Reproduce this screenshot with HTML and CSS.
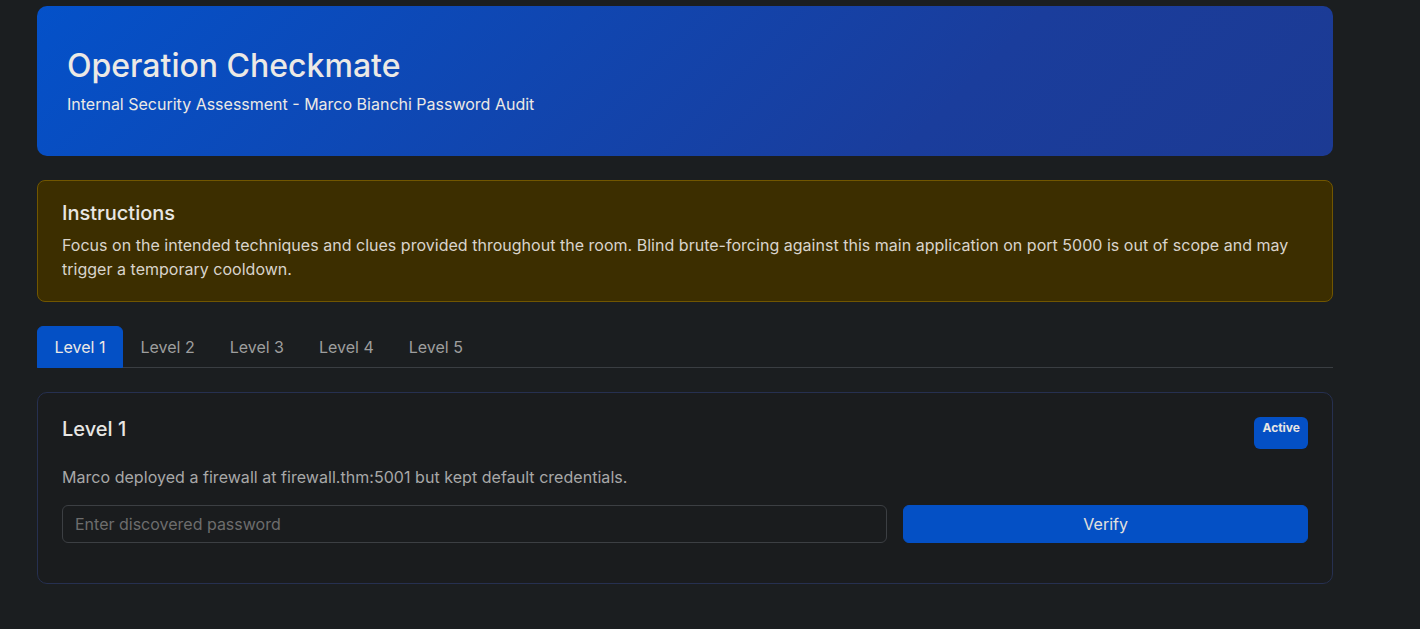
FILE: index.html
```html
<!DOCTYPE html>
<html lang="en">
<head>
    <meta charset="UTF-8">
    <meta name="viewport" content="width=device-width, initial-scale=1.0">
    <title>Operation Checkmate</title>
    <link rel="stylesheet" href="styles.css">
</head>
<body>
    <div class="container">
        <div class="hero">
            <h1>Operation Checkmate</h1>
            <p>Internal Security Assessment - Marco Bianchi Password Audit</p>
        </div>

        <div class="notice">
            <h5>Instructions</h5>
            <p>Focus on the intended techniques and clues provided throughout the room. Blind brute-forcing against this main application on port 5000 is out of scope and may trigger a temporary cooldown.</p>
        </div>

        <ul class="tabs">
            <li class="tab active">Level 1</li>
            <li class="tab">Level 2</li>
            <li class="tab">Level 3</li>
            <li class="tab">Level 4</li>
            <li class="tab">Level 5</li>
        </ul>

        <div class="card">
            <div class="card-head">
                <h5>Level 1</h5>
                <span class="badge">Active</span>
            </div>
            <p class="desc">Marco deployed a firewall at firewall.thm:5001 but kept default credentials.</p>
            <form class="verify-form" onsubmit="return false">
                <input type="text" placeholder="Enter discovered password">
                <button type="submit">Verify</button>
            </form>
        </div>
    </div>
</body>
</html>
```

FILE: styles.css
```css
body {
    margin: 0;
    background-color: #1b1e20;
    color: #e8e6e3;
    font-family: Inter, "Noto Sans", sans-serif;
    font-size: 16px;
    line-height: 1.5;
}
.container {
    width: 1296px;
    margin-left: 37px;
    padding-top: 6px;
}
.hero {
    background: linear-gradient(135deg, #0451c9 0%, #1a3d9c 70%, #1c3a93 100%);
    border-radius: 10px;
    padding: 41px 30px 40px;
    margin-bottom: 24px;
    color: #ece9e5;
}
.hero h1 {
    margin: 0 0 7px;
    font-size: 32px;
    font-weight: 500;
    line-height: 1.2;
}
.hero p {
    margin: 0;
}
.notice {
    background-color: #3c2e00;
    border: 1px solid #715600;
    border-radius: 8px;
    padding: 20px 24px;
    margin-bottom: 24px;
}
.notice h5, .card h5 {
    margin: 0 0 8px;
    font-size: 20px;
    font-weight: 500;
    line-height: 1.2;
    color: #e8e6e3;
}
.notice p {
    margin: 0;
    color: #d9d4cc;
    letter-spacing: 0.02px;
}
.tabs {
    display: flex;
    list-style: none;
    margin: 0 0 24px;
    padding: 0;
    border-bottom: 1px solid #3a3e42;
}
.tab {
    padding: 8px 16.5px;
    border: 1px solid transparent;
    border-top-left-radius: 6px;
    border-top-right-radius: 6px;
    margin-bottom: -1px;
    color: #9e9e9e;
    cursor: pointer;
}
.tab.active {
    background-color: #0450c5;
    border-color: #0450c5;
    color: #ece9e5;
}
.card {
    background-color: #1a1c1e;
    border: 1px solid #263050;
    border-radius: 10px;
    padding: 24px;
}
.card-head {
    display: flex;
    justify-content: space-between;
}
.badge {
    padding: 5px 8px 3px;
    background-color: #0450c5;
    border-radius: 6px;
    color: #e8e6e3;
    font-size: 12px;
    font-weight: 700;
    line-height: 1;
}
.desc {
    margin: 16px 0;
    color: #a8a8a8;
    letter-spacing: 0.04px;
}
.verify-form {
    display: grid;
    grid-template-columns: calc((100% + 16px) * 2 / 3 - 16px) 1fr;
    column-gap: 16px;
    margin-bottom: 16px;
}
.verify-form input {
    height: 38px;
    box-sizing: border-box;
    padding: 6px 12px;
    background-color: #1a1c1e;
    border: 1px solid #3c3f43;
    border-radius: 6px;
    color: #e8e6e3;
    font: inherit;
}
.verify-form input::placeholder {
    color: #6d6d6d;
}
.verify-form button {
    height: 38px;
    background-color: #0450c5;
    border: 1px solid #0450c5;
    border-radius: 6px;
    color: #e3e1de;
    font: inherit;
    cursor: pointer;
}
```
